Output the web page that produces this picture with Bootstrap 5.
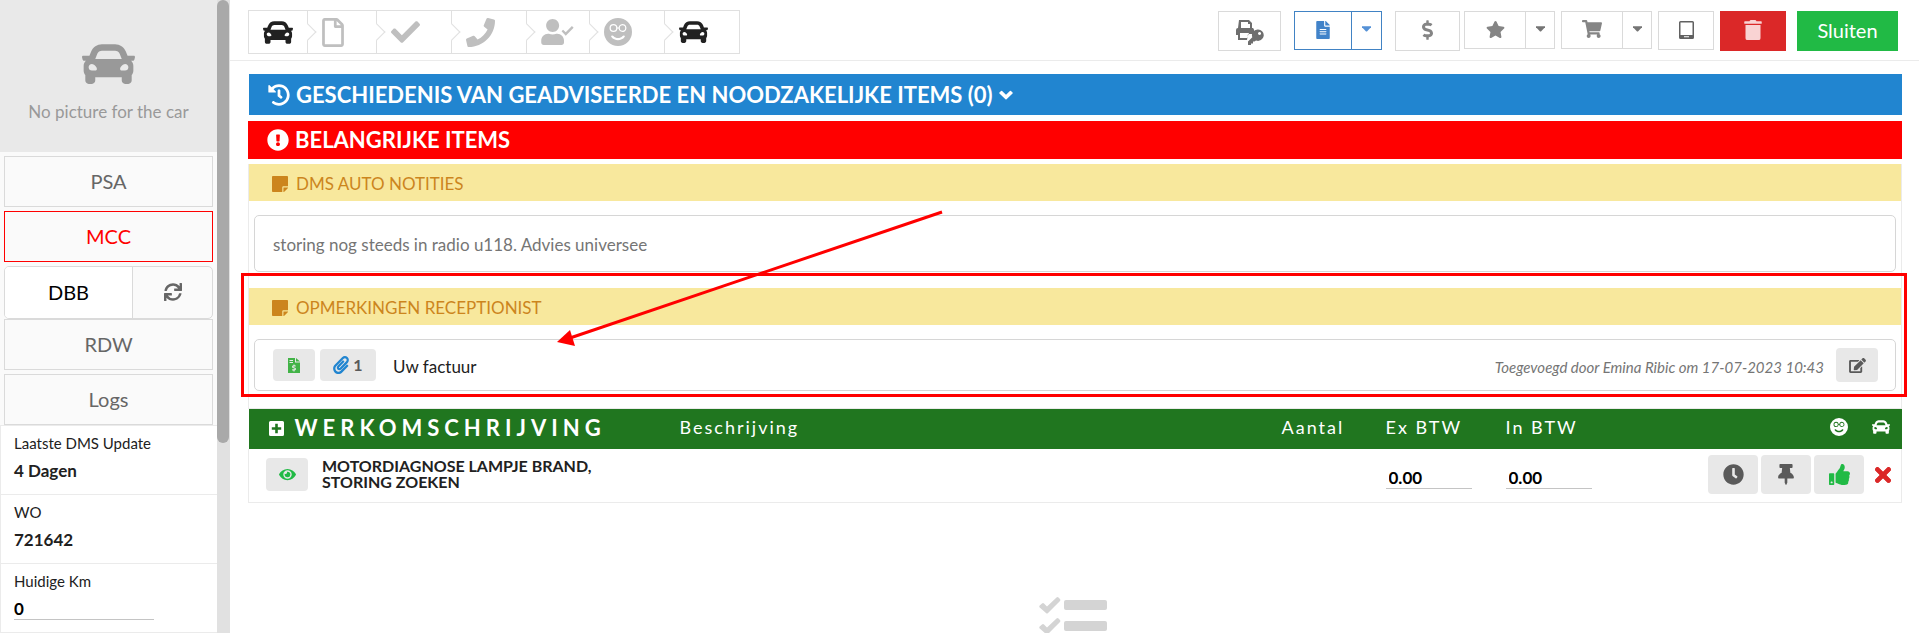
<!DOCTYPE html>
<html lang="nl">
<head>
<meta charset="utf-8">
<meta name="viewport" content="width=device-width, initial-scale=1">
<title>Werkorder 721642</title>
<link rel="stylesheet" href="https://cdn.jsdelivr.net/npm/bootstrap@5.3.0/dist/css/bootstrap.min.css">
<style>
  body { font-family: Lato, "Liberation Sans", sans-serif; font-size: 17px; line-height: 20px; color: #212121; background: #fff; }
  svg { fill: currentColor; display: block; flex: none; }
  .btn { --bs-btn-border-radius: 0; --bs-btn-padding-x: 0; --bs-btn-padding-y: 0; display: flex; align-items: center; justify-content: center; }

  /* sidebar */
  .side { width: 230px; background: #fafafa; }
  .photo { height: 152px; background: #e9e9e9; color: #999; font-size: 17px; gap: 18px; padding-top: 44px; }
  .side-btn { height: 51px; border: 1px solid #dadada; color: #666; background: #fafafa; font-size: 20px; padding-bottom: 2px; }
  .side-btn.alert-btn { border-color: red; color: red; }
  .split { height: 53px; border: 1px solid #dadada; border-radius: 5px; overflow: hidden; }
  .split .btn { font-size: 20px; border: 0; color: #666; padding-bottom: 2px; }
  .split .main-half { flex: 0 0 128px; background: #fff; color: #000; border-right: 1px solid #dadada; }
  .fact { background: #fff; border: 1px solid #ebebeb; border-width: 1px 0 0 1px; height: 69px; padding: 7px 13px; }
  .fact dt, .fact label { font-weight: 400; font-size: 15px; }
  .fact dd, .fact input { font-weight: 700; margin: 8px 0 0; font-size: 17px; line-height: 20px; }
  .line-input { border: 0; border-bottom: 1px solid #c4c4c4; background: none; padding: 0; border-radius: 0; display: block; font-weight: 700; }
  .fact .line-input { width: 140px; }
  .track { width: 13px; background: #e1e1e1; }
  .thumb { width: 12px; height: 70%; background: #a9a9a9; border-radius: 6px; }

  /* top bar */
  .topbar { height: 61px; border-bottom: 1px solid #ebebeb; padding: 10px 21px 0 18px; }
  .steps { border: 1px solid #e0e0e0; height: 44px; width: 492px; }
  .step { border: 0; background: none; padding: 0 0 0 14px; position: relative; display: flex; align-items: center; color: #bfbfbf; border-right: 1px solid #e0e0e0; }
  .step:last-child { border-right: 0; }
  .step:not(:last-child)::after { content: ""; position: absolute; right: -7px; top: 15px; width: 12px; height: 12px; background: #fff; border: 1px solid #e0e0e0; border-width: 1px 1px 0 0; transform: rotate(45deg); }
  .step.done { color: #212121; }
  .w59 { width: 59px; } .w69 { width: 69px; } .w75 { width: 75px; } .w62 { width: 63px; }
  .tools { padding-top: 1px; }
  .tool { border: 1px solid #dadada; background: #fff; color: #858585; height: 40px; padding-bottom: 2px; }
  .tool.low { height: 38px; } .tool.mid { height: 39px; }
  .tool.keyed { padding: 4px 0 0; }
  .tool + .drop { border-left: 0; }
  .blue { border-color: #4183c4; color: #4183c9; }
  .drop { width: 30px; color: #757575; padding-bottom: 3px; }
  .drop.blue { color: #5591d6; }
  .red { background: #db2828; border-color: #db2828; color: #f9d3d3; width: 66px; }
  .green { background: #21ba45; border-color: #21ba45; color: #fff; width: 101px; font-size: 20px; }

  /* content */
  .content { padding: 13px 17px 0 18px; }
  .bar { color: #fff; font-size: 22px; font-weight: 700; line-height: 26px; padding-left: 19px; gap: 6px; border: 0; }
  .bar-blue { background: #2185d0; height: 41px; margin-left: 1px; width: calc(100% - 1px); }
  .bar-red { background: red; height: 38px; margin: 6px 0 5px; }
  .frame { border: 1px solid #ebebeb; border-top: 0; }
  .note-head { background: #f8e89d; color: #cc851d; font-size: 17px; font-weight: 400; line-height: 20px; height: 37px; padding: 2px 0 0 23px; gap: 8px; margin: 0; }
  .note { border: 1px solid #d6d6d6; border-radius: 5px; margin: 14px 5px 0; padding: 0 17px 0 18px; }
  .note-a { height: 57px; color: #757575; padding-top: 2px; }
  .note-b { height: 52px; }
  .soft { background: #e8e8e8; color: #5a5a5a; border: 0; border-radius: 4px; }
  .stamp { font-size: 15px; color: #757575; }
  .reception { position: relative; margin-top: 16px; padding-bottom: 17px; }
  .highlight { position: absolute; inset: -15px -6px 11px -8px; border: 3px solid red; pointer-events: none; }
  .pointer { position: absolute; left: 300px; top: -80px; pointer-events: none; }

  /* work table */
  .work { table-layout: fixed; width: 100%; margin: 0; border-collapse: collapse; }
  .work th { background: #20761f; color: #fff; height: 40px; font-weight: 400; font-size: 18px; letter-spacing: 2px; padding: 0 0 4px; vertical-align: middle; }
  .work th.title { font-size: 22px; font-weight: 700; letter-spacing: 5px; padding: 0 0 2px 20px; }
  .work td { height: 53px; padding: 0 0 1px; vertical-align: middle; }
  .frame-row { border: 1px solid #ebebeb; border-top: 0; }
  .job { font-size: 16px; font-weight: 700; line-height: 16px; padding-bottom: 2px; }
  .work .line-input { width: 86px; color: #000; font-size: 17px; height: 24px; padding: 2px 0 0 3px; margin-top: 4px; }
</style>
</head>
<body class="d-flex vh-100 overflow-hidden">

<svg width="0" height="0" class="position-absolute" aria-hidden="true">
  <symbol id="car" viewBox="0 64 512 384"><path d="M499.99 176h-59.87l-16.64-41.6C406.38 91.63 365.57 64 319.5 64h-127c-46.06 0-86.88 27.63-103.99 70.4L71.87 176H12.01C4.2 176-1.53 183.34.37 190.91l6 24C7.7 220.25 12.5 224 18.01 224h20.07C24.65 235.73 16 252.78 16 272v48c0 16.12 6.16 30.67 16 41.93V416c0 17.67 14.33 32 32 32h32c17.67 0 32-14.33 32-32v-32h256v32c0 17.67 14.33 32 32 32h32c17.67 0 32-14.33 32-32v-54.07c9.84-11.25 16-25.8 16-41.93v-48c0-19.22-8.65-36.27-22.07-48H494c5.51 0 10.31-3.75 11.64-9.09l6-24c1.89-7.57-3.84-14.91-11.65-14.91zm-352.06-17.83c7.29-18.22 24.94-30.17 44.57-30.17h127c19.63 0 37.28 11.95 44.57 30.17L384 208H128l19.93-49.83zM96 319.8c-19.2 0-32-12.76-32-31.9S76.8 256 96 256s48 28.71 48 47.85-28.8 15.95-48 15.95zm320 0c-19.2 0-48 3.19-48-15.95S396.8 256 416 256s32 12.76 32 31.9-12.8 31.9-32 31.9z"/></symbol>
  <symbol id="smile" viewBox="0 0 28 28"><path fill-rule="evenodd" d="M14 0a14 14 0 1 1 0 28a14 14 0 1 1 0-28zM9.500 6a4 4 0 1 0 0 8a4 4 0 0 0 4-3.500h1a4 4 0 1 0 0-1h-1a4 4 0 0 0-4-3.500zM9.500 7.300a2.700 2.700 0 1 1 0 5.400a2.700 2.700 0 1 1 0-5.400zM18.500 7.300a2.700 2.700 0 1 1 0 5.400a2.700 2.700 0 1 1 0-5.400zM8 17.500c-1 .3-1 1-.600 1.600c3 4.200 10.200 4.200 13.200 0c.400-.600.400-1.300-.600-1.600c-.500-.2-1 0-1.400.500c-2.500 2.700-6.700 2.700-9.200 0c-.400-.500-.900-.700-1.400-.500z"/></symbol>
  <symbol id="check" viewBox="0 65 512 382"><path d="M173.898 439.404l-166.4-166.4c-9.997-9.997-9.997-26.206 0-36.204l36.203-36.204c9.997-9.998 26.207-9.998 36.204 0L192 312.69 432.095 72.596c9.997-9.997 26.207-9.997 36.204 0l36.203 36.204c9.997 9.997 9.997 26.206 0 36.204l-294.4 294.401c-9.998 9.997-26.207 9.997-36.204-.001z"/></symbol>
  <symbol id="note" viewBox="0 32 448 448"><path d="M312 320h136V56c0-13.300-10.700-24-24-24H24C10.700 32 0 42.700 0 56v400c0 13.300 10.700 24 24 24h264V344c0-13.200 10.800-24 24-24zm129 55l-98 98c-4.500 4.500-10.600 7-17 7h-6V352h128v6.100c0 6.300-2.500 12.400-7 16.900z"/></symbol>
  <symbol id="caret" viewBox="0 0 10 6"><path d="M0 0h10v1L5.500 5.700h-1L0 1z"/></symbol>
</svg>

<aside class="side d-flex flex-shrink-0 h-100 overflow-hidden">
  <div class="flex-grow-1">
    <div class="photo d-flex flex-column align-items-center">
      <svg width="53" height="40"><use href="#car"/></svg>
      <span>No picture for the car</span>
    </div>
    <div class="d-flex flex-column gap-1 px-1 pt-1">
      <button class="btn side-btn">PSA</button>
      <button class="btn side-btn alert-btn">MCC</button>
      <div>
        <div class="split d-flex">
          <button class="btn main-half h-100">DBB</button>
          <button class="btn flex-grow-1 h-100" aria-label="Vernieuwen"><svg width="18" height="18" viewBox="0 0 512 512"><path d="M440.650 12.570l4 82.770A247.160 247.160 0 0 0 255.830 8C134.730 8 33.910 94.920 12.290 209.820A12 12 0 0 0 24.090 224h49.050a12 12 0 0 0 11.670-9.260 175.910 175.910 0 0 1 317-56.940l-101.460-4.860a12 12 0 0 0-12.570 12v47.410a12 12 0 0 0 12 12H500a12 12 0 0 0 12-12V12a12 12 0 0 0-12-12h-47.370a12 12 0 0 0-11.980 12.570zM255.830 432a175.610 175.610 0 0 1-146-77.800l101.800 4.870a12 12 0 0 0 12.570-12v-47.400a12 12 0 0 0-12-12H12a12 12 0 0 0-12 12V500a12 12 0 0 0 12 12h47.350a12 12 0 0 0 12-12.600l-4.150-82.570A247.170 247.170 0 0 0 255.830 504c121.110 0 221.930-86.920 243.550-201.820a12 12 0 0 0-11.800-14.180h-49.050a12 12 0 0 0-11.670 9.260A175.860 175.860 0 0 1 255.830 432z"/></svg></button>
        </div>
        <button class="btn side-btn w-100">RDW</button>
      </div>
      <button class="btn side-btn">Logs</button>
    </div>
    <dl class="m-0">
      <div class="fact"><dt>Laatste DMS Update</dt><dd>4 Dagen</dd></div>
      <div class="fact"><dt>WO</dt><dd>721642</dd></div>
      <div class="fact"><label for="km" class="d-block">Huidige Km</label><input id="km" class="line-input" value="0"></div>
      <div class="fact"></div>
    </dl>
  </div>
  <div class="track h-100 flex-shrink-0"><div class="thumb"></div></div>
</aside>

<main class="flex-grow-1 overflow-hidden">
  <header class="topbar d-flex justify-content-between align-items-start">
    <nav class="steps d-flex" aria-label="Voortgang">
      <button class="step done w59" aria-label="Auto binnen"><svg width="30" height="23"><use href="#car"/></svg></button>
      <button class="step w69" aria-label="Document"><svg width="22" height="29" viewBox="0 0 384 512"><path d="M369.900 97.900L286 14C277 5 264.800-.1 252.100-.1H48C21.500 0 0 21.500 0 48v416c0 26.500 21.500 48 48 48h288c26.500 0 48-21.500 48-48V131.900c0-12.700-5.100-25-14.100-34zM332.100 128H256V51.900l76.100 76.100zM48 464V48h160v104c0 13.300 10.700 24 24 24h104v288H48z"/></svg></button>
      <button class="step w75" aria-label="Akkoord"><svg width="29" height="22"><use href="#check"/></svg></button>
      <button class="step w75" aria-label="Bellen"><svg width="29" height="29" viewBox="0 0 512 512"><path d="M493.400 24.600l-104-24c-11.300-2.600-22.900 3.300-27.500 13.900l-48 112c-4.200 9.800-1.400 21.300 6.900 28l60.600 49.600c-36 76.700-98.900 140.500-177.200 177.200l-49.600-60.600c-6.800-8.300-18.200-11.100-28-6.900l-112 48C3.900 366.500-2 378.100.600 389.400l24 104C27.100 504.200 36.700 512 48 512c256.100 0 464-207.500 464-464 0-11.200-7.700-20.900-18.600-23.400z"/></svg></button>
      <button class="step w62" aria-label="Klant akkoord"><svg width="33" height="26" viewBox="0 0 640 512"><path d="M224 256c70.700 0 128-57.300 128-128S294.700 0 224 0 96 57.300 96 128s57.300 128 128 128zm89.600 32h-16.700c-22.200 10.200-46.900 16-72.900 16s-50.600-5.800-72.900-16h-16.700C60.200 288 0 348.200 0 422.400V464c0 26.500 21.500 48 48 48h352c26.500 0 48-21.500 48-48v-41.600c0-74.200-60.200-134.400-134.400-134.400z"/><path d="M400 240l30-30 52 50 122-124 34 34-156 160z"/></svg></button>
      <button class="step w75" aria-label="Tevreden"><svg width="28" height="28"><use href="#smile"/></svg></button>
      <button class="step done" aria-label="Auto klaar"><svg width="29" height="22"><use href="#car"/></svg></button>
    </nav>
    <div class="tools d-flex align-items-start">
      <button class="btn tool keyed" style="width:63px" aria-label="Afdrukken en sleutel"><svg width="28" height="26" viewBox="0 0 28 26" color="#6e6e6e"><path fill-rule="evenodd" d="M3 0h10l3 3v5h1q1 1 1 2v4h-6l-1 6H2v-5H0v-5q0-2 2-2zM5 2v6h9V4h-2V2zM4 13v5h7l2-5z"/><path fill="#fff" d="M21 8.500a7 7 0 0 1 0 13l-3 1-3 3.500h-5l2-6 4-4z"/><path fill-rule="evenodd" d="M21.500 9.500a5.700 5.700 0 1 1-1.500 11l-1.500 1h-1.500v2h-2v1.500h-3v-3.500l4.300-4.300a5.700 5.700 0 0 1 5.200-7.700zM23.500 12a1.500 1.500 0 1 0 .1 0z"/></svg></button>
      <div class="d-flex" style="margin:0 13px">
        <button class="btn tool mid blue" style="width:58px" aria-label="Factuur"><svg width="14" height="18" viewBox="0 0 384 512"><path d="M224 136V0H24C10.700 0 0 10.700 0 24v464c0 13.300 10.700 24 24 24h336c13.300 0 24-10.700 24-24V160H248c-13.200 0-24-10.800-24-24zm64 236c0 6.600-5.400 12-12 12H108c-6.600 0-12-5.400-12-12v-8c0-6.600 5.400-12 12-12h168c6.600 0 12 5.400 12 12v8zm0-64c0 6.600-5.400 12-12 12H108c-6.600 0-12-5.400-12-12v-8c0-6.600 5.400-12 12-12h168c6.600 0 12 5.400 12 12v8zm0-72v8c0 6.600-5.400 12-12 12H108c-6.600 0-12-5.400-12-12v-8c0-6.600 5.400-12 12-12h168c6.600 0 12 5.400 12 12zm96-114.100v6.100H256V0h6.100c6.400 0 12.500 2.500 17 7l97.900 98c4.500 4.500 7 10.600 7 16.900z"/></svg></button>
        <button class="btn tool mid blue drop" aria-label="Meer"><svg width="9" height="6"><use href="#caret"/></svg></button>
      </div>
      <button class="btn tool me-1" style="width:65px" aria-label="Betaling"><svg width="11" height="20" viewBox="0 0 288 512"><path d="M209.200 233.400l-108-31.600C88.700 198.200 80 186.500 80 173.500c0-16.300 13.200-29.500 29.500-29.500h66.300c12.200 0 24.200 3.700 34.200 10.500 6.100 4.100 14.300 3.100 19.500-2l34.800-34c7.100-6.900 6.100-18.400-1.800-24.500C238 74.800 207.400 64.100 176 64V16c0-8.800-7.200-16-16-16h-32c-8.800 0-16 7.200-16 16v48h-2.500C45.800 64-5.400 118.700.5 183.600c4.200 46.100 39.400 83.600 83.800 96.600l102.500 30c12.500 3.700 21.200 15.300 21.200 28.300 0 16.300-13.200 29.500-29.500 29.500h-66.300C100 368 88 364.300 78 357.500c-6.100-4.100-14.300-3.100-19.500 2l-34.800 34c-7.100 6.900-6.100 18.400 1.800 24.500 24.500 19.200 55.100 29.900 86.500 30v48c0 8.800 7.200 16 16 16h32c8.800 0 16-7.200 16-16v-48.200c46.600-.9 90.300-28.600 105.700-72.700 21.500-61.600-14.600-124.800-72.500-141.700z"/></svg></button>
      <div class="d-flex">
        <button class="btn tool low" style="width:62px" aria-label="Favoriet"><svg width="19" height="17" viewBox="20 0 536 512"><path d="M259.300 17.800L194 150.200 47.900 171.500c-26.200 3.800-36.700 36.100-17.700 54.600l105.700 103-25 145.500c-4.500 26.300 23.200 46 46.400 33.700L288 439.600l130.700 68.700c23.200 12.200 50.900-7.400 46.400-33.700l-25-145.500 105.700-103c19-18.500 8.500-50.800-17.700-54.600L382 150.200 316.700 17.800c-11.700-23.600-45.600-23.900-57.400 0z"/></svg></button>
        <button class="btn tool low drop" style="width:29px" aria-label="Meer"><svg width="9" height="6"><use href="#caret"/></svg></button>
      </div>
      <div class="d-flex" style="margin:0 6px">
        <button class="btn tool low" style="width:62px" aria-label="Winkelwagen"><svg width="20" height="18" viewBox="0 0 576 512"><path d="M528.120 301.319l47.273-208C578.806 78.301 567.391 64 551.990 64H159.208l-9.166-44.810C147.758 8.021 137.930 0 126.529 0H24C10.745 0 0 10.745 0 24v16c0 13.255 10.745 24 24 24h69.883l70.248 343.435C147.325 417.100 136 435.222 136 456c0 30.928 25.072 56 56 56s56-25.072 56-56c0-15.674-6.447-29.835-16.824-40h209.647C430.447 426.165 424 440.326 424 456c0 30.928 25.072 56 56 56s56-25.072 56-56c0-22.172-12.888-41.332-31.579-50.405l5.517-24.276c3.413-15.018-8.002-29.319-23.403-29.319H218.117l-6.545-32h293.145c11.206 0 20.920-7.754 23.403-18.681z"/></svg></button>
        <button class="btn tool low drop" style="width:29px" aria-label="Meer"><svg width="9" height="6"><use href="#caret"/></svg></button>
      </div>
      <button class="btn tool mid" style="width:56px" aria-label="Tablet"><svg width="15" height="18" viewBox="0 0 15 18" color="#616161"><path fill-rule="evenodd" d="M1.500 0h12q1.500 0 1.500 1.500v15q0 1.500-1.500 1.500h-12Q0 18 0 16.500v-15Q0 0 1.500 0zM1.500 1.500v12.500h12V1.500zM5 15.200v1h5v-1z"/></svg></button>
      <button class="btn tool red" style="margin:0 11px 0 6px" aria-label="Verwijderen"><svg width="18" height="20" viewBox="0 0 448 512"><path d="M32 464a48 48 0 0 0 48 48h288a48 48 0 0 0 48-48V128H32zM432 32H312l-9.400-18.700A24 24 0 0 0 281.100 0H166.800a23.720 23.720 0 0 0-21.400 13.300L136 32H16A16 16 0 0 0 0 48v32a16 16 0 0 0 16 16h416a16 16 0 0 0 16-16V48a16 16 0 0 0-16-16z"/></svg></button>
      <button class="btn tool green">Sluiten</button>
    </div>
  </header>

  <div class="content">
    <button class="bar bar-blue d-flex align-items-center">
      <svg width="22" height="22" viewBox="0 0 512 512"><path d="M504 255.531c.253 136.640-111.180 248.372-247.820 248.468-59.015.042-113.223-20.530-155.822-54.911-11.077-8.940-11.905-25.541-1.839-35.607l11.267-11.267c8.609-8.609 22.353-9.551 31.891-1.984C173.062 425.135 212.781 440 256 440c101.705 0 184-82.311 184-184 0-101.705-82.311-184-184-184-48.814 0-93.149 18.969-126.068 49.932l50.754 50.754c10.080 10.080 2.941 27.314-11.313 27.314H24c-8.837 0-16-7.163-16-16V38.627c0-14.254 17.234-21.393 27.314-11.314l49.372 49.372C129.209 34.136 189.552 8 256 8c136.810 0 247.747 110.781 248 247.531zm-180.912 78.784l9.823-12.630c8.138-10.463 6.253-25.542-4.210-33.679L288 256.349V152c0-13.255-10.745-24-24-24h-16c-13.255 0-24 10.745-24 24v135.651l65.409 50.874c10.463 8.137 25.541 6.253 33.679-4.210z"/></svg>
      <span>GESCHIEDENIS VAN GEADVISEERDE EN NOODZAKELIJKE ITEMS (0)</span>
      <svg width="14" height="10" viewBox="0 0 13 9"><path d="M.4 2.200L1.900.7q.5-.4 1 0L6.500 4.300 10.100.7q.5-.4 1 0l1.500 1.500q.4.500 0 1L7 8.500q-.5.400-1 0L.4 3.200q-.4-.5 0-1z"/></svg>
    </button>
    <h2 class="bar bar-red d-flex align-items-center">
      <svg width="22" height="22" viewBox="0 0 512 512"><path d="M504 256c0 136.997-111.043 248-248 248S8 392.997 8 256C8 119.083 119.043 8 256 8s248 111.083 248 248zm-248 50c-25.405 0-46 20.595-46 46s20.595 46 46 46 46-20.595 46-46-20.595-46-46-46zm-43.673-165.346l7.418 136c.347 6.364 5.609 11.346 11.982 11.346h48.546c6.373 0 11.635-4.982 11.982-11.346l7.418-136c.375-6.874-5.098-12.654-11.982-12.654h-63.383c-6.884 0-12.356 5.780-11.981 12.654z"/></svg>
      <span>BELANGRIJKE ITEMS</span>
    </h2>

    <div class="frame">
      <section>
        <h3 class="note-head d-flex align-items-center"><svg width="16" height="16"><use href="#note"/></svg>DMS AUTO NOTITIES</h3>
        <div class="note note-a d-flex align-items-center">storing nog steeds in radio u118. Advies universee</div>
      </section>
      <section class="reception">
        <h3 class="note-head d-flex align-items-center"><svg width="16" height="16"><use href="#note"/></svg>OPMERKINGEN RECEPTIONIST</h3>
        <div class="note note-b d-flex align-items-center">
          <button class="btn soft" style="width:42px;height:32px" aria-label="Factuur"><svg width="12" height="15" viewBox="0 0 12 15" color="#42b347"><path fill-rule="evenodd" d="M0 0h7v4.500h5V15H0zM1.500 2v1H5V2zM1.500 4v1H5V4zM5.500 6.500v.8q-1.500.3-1.500 1.500t1.500 1.400l1 .3q.5.500-.3.700H4.200v1.200l1.300.2v.9h1v-.9Q8 12.300 8 11.100T6.500 9.500l-1-.3q-.5-.5.300-.7h1.900V7.400l-1.200-.2v-.7z"/><path d="M8 0l4 3.500H8z"/></svg></button>
          <button class="btn soft gap-1 fw-bold" style="width:56px;height:32px;margin-left:5px"><svg width="16" height="18" viewBox="0 0 448 512" color="#2185d0"><path d="M43.246 466.142c-58.430-60.289-57.341-157.511 1.386-217.581L254.392 34c44.316-45.332 116.351-45.336 160.671 0 43.890 44.894 43.943 117.329 0 162.276L232.214 383.128c-29.855 30.537-78.633 30.111-107.982-.998-28.275-29.970-27.368-77.473 1.452-106.953l143.743-146.835c6.182-6.314 16.312-6.422 22.626-.241l22.861 22.379c6.315 6.182 6.422 16.312.241 22.626L171.427 319.927c-4.932 5.045-5.236 13.428-.648 18.292 4.372 4.634 11.245 4.711 15.688.165l182.849-186.851c19.613-20.062 19.613-52.725-.011-72.798-19.189-19.627-49.957-19.637-69.154 0L90.390 293.295c-34.763 35.560-35.299 93.120-1.191 128.313 34.010 35.093 88.985 35.137 123.058.286l172.060-175.999c6.177-6.319 16.307-6.433 22.626-.256l22.877 22.364c6.319 6.177 6.434 16.307.256 22.626l-172.060 175.998c-59.576 60.938-155.943 60.216-214.770-.485z"/></svg>1</button>
          <span class="pt-1" style="margin-left:17px">Uw factuur</span>
          <em class="stamp ms-auto pt-1">Toegevoegd door Emina Ribic om 17-07-2023 10:43</em>
          <button class="btn soft" style="width:42px;height:34px;margin-left:12px" aria-label="Bewerken"><svg width="17" height="15" viewBox="0 0 576 512"><path d="M402.600 83.200l90.200 90.200c3.800 3.800 3.800 10 0 13.800L274.400 405.600l-92.800 10.300c-12.400 1.400-22.900-9.100-21.500-21.500l10.300-92.800L388.800 83.200c3.800-3.800 10-3.800 13.800 0zm162-22.900l-48.800-48.800c-15.200-15.200-39.900-15.200-55.200 0l-35.400 35.400c-3.800 3.800-3.800 10 0 13.800l90.200 90.200c3.800 3.800 10 3.800 13.800 0l35.400-35.400c15.200-15.300 15.200-40 0-55.200zM384 346.200V448H64V128h229.800c3.200 0 6.200-1.300 8.500-3.500l40-40c7.600-7.600 2.200-20.500-8.500-20.500H48C21.500 64 0 85.500 0 112v352c0 26.500 21.500 48 48 48h352c26.500 0 48-21.500 48-48V306.200c0-10.700-12.900-16-20.500-8.500l-40 40c-2.200 2.300-3.500 5.300-3.500 8.500z"/></svg></button>
        </div>
        <div class="highlight"></div>
        <svg class="pointer" width="400" height="140" viewBox="0 0 400 140" color="#f00"><path d="M21 130L393 4" stroke="red" stroke-width="3"/><path d="M8 134L21 122 26 138z"/></svg>
      </section>
    </div>

    <table class="work">
      <colgroup><col style="width:431px"><col><col style="width:104px"><col style="width:120px"><col style="width:202px"><col style="width:109px"><col style="width:85px"></colgroup>
      <thead><tr>
        <th class="title"><div class="d-flex align-items-center" style="gap:11px"><svg width="15" height="15" viewBox="0 0 15 15"><path fill-rule="evenodd" d="M1.500 0h12q1.500 0 1.500 1.500v12q0 1.500-1.500 1.500h-12Q0 15 0 13.500v-12Q0 0 1.500 0zM6.200 2.800v3.400H2.800v2.600h3.400v3.400h2.600V8.800h3.400V6.200H8.800V2.800z"/></svg>WERKOMSCHRIJVING</div></th>
        <th>Beschrijving</th><th>Aantal</th><th>Ex BTW</th><th>In BTW</th><th></th>
        <th><div class="d-flex align-items-center justify-content-end" style="gap:24px;padding-right:12px"><svg width="18" height="18"><use href="#smile"/></svg><svg width="18" height="14"><use href="#car"/></svg></div></th>
      </tr></thead>
      <tbody><tr class="frame-row">
        <td><div class="d-flex align-items-center" style="gap:14px;padding-left:17px">
          <button class="btn soft" style="width:42px;height:33px;color:#21ba45" aria-label="Tonen"><svg width="17" height="15" viewBox="0 0 576 512"><path d="M572.520 241.400C518.290 135.590 410.930 64 288 64S57.680 135.640 3.480 241.410a32.350 32.350 0 0 0 0 29.190C57.710 376.410 165.070 448 288 448s230.320-71.640 284.520-177.410a32.350 32.350 0 0 0 0-29.190zM288 400a144 144 0 1 1 144-144 143.930 143.930 0 0 1-144 144zm0-240a95.310 95.310 0 0 0-25.310 3.790 47.850 47.850 0 0 1-66.900 66.900A95.780 95.780 0 1 0 288 160z"/></svg></button>
          <div class="job">MOTORDIAGNOSE LAMPJE BRAND,<br>STORING ZOEKEN</div></div></td>
        <td></td><td></td>
        <td><input class="line-input" aria-label="Ex BTW" value="0.00"></td>
        <td><input class="line-input" aria-label="In BTW" value="0.00"></td>
        <td colspan="2"><div class="d-flex align-items-center justify-content-end" style="gap:3px;padding-right:10px">
          <button class="btn soft" style="width:50px;height:39px" aria-label="Tijd"><svg width="21" height="21" viewBox="0 0 512 512"><path d="M256,8C119,8,8,119,8,256S119,504,256,504,504,393,504,256,393,8,256,8Zm92.490,313h0l-20,25a16,16,0,0,1-22.490,2.500h0l-67-49.720a40,40,0,0,1-15-31.230V112a16,16,0,0,1,16-16h32a16,16,0,0,1,16,16V256l58,42.500A16,16,0,0,1,348.490,321Z"/></svg></button>
          <button class="btn soft" style="width:50px;height:39px" aria-label="Vastzetten"><svg width="16" height="21" viewBox="0 0 384 512"><path d="M298.028 214.267L285.793 96H328c13.255 0 24-10.745 24-24V24c0-13.255-10.745-24-24-24H56C42.745 0 32 10.745 32 24v48c0 13.255 10.745 24 24 24h42.207L85.972 214.267C37.465 236.820 0 277.261 0 328c0 13.255 10.745 24 24 24h136v104.007c0 1.242.289 2.467.845 3.578l24 48c2.941 5.882 11.364 5.893 14.311 0l24-48a8.008 8.008 0 0 0 .845-3.578V352h136c13.255 0 24-10.745 24-24-.001-51.183-37.983-91.420-85.973-113.733z"/></svg></button>
          <button class="btn soft" style="width:50px;height:39px;color:#21ba45" aria-label="Goedkeuren"><svg width="21" height="21" viewBox="0 0 512 512"><path d="M104 224H24c-13.255 0-24 10.745-24 24v240c0 13.255 10.745 24 24 24h80c13.255 0 24-10.745 24-24V248c0-13.255-10.745-24-24-24zM64 472c-13.255 0-24-10.745-24-24s10.745-24 24-24 24 10.745 24 24-10.745 24-24 24zM384 81.452c0 42.416-25.970 66.208-33.277 94.548h101.723c33.397 0 59.397 27.746 59.553 58.098.084 17.938-7.546 37.249-19.439 49.197l-.110.110c9.836 23.337 8.237 56.037-9.308 79.469 8.681 25.895-.069 57.704-16.382 74.757 4.298 17.598 2.244 32.575-6.148 44.632C440.202 511.587 389.616 512 346.839 512l-2.845-.001c-48.287-.017-87.806-17.598-119.560-31.725-15.957-7.099-36.821-15.887-52.651-16.178-6.540-.120-11.783-5.457-11.783-11.998v-213.770c0-3.200 1.282-6.271 3.558-8.521 39.614-39.144 56.648-80.587 89.117-113.111 14.804-14.832 20.188-37.236 25.393-58.902C282.515 39.293 291.817 0 312 0c24 0 72 8 72 81.452z"/></svg></button>
          <button class="btn border-0 ms-2" style="color:#db2828" aria-label="Regel verwijderen"><svg width="16" height="16" viewBox="0 80 352 352"><path stroke="currentColor" stroke-width="16" d="M242.720 256l100.070-100.070c12.280-12.280 12.280-32.190 0-44.480l-22.240-22.240c-12.280-12.280-32.190-12.280-44.480 0L176 189.280 75.930 89.210c-12.280-12.280-32.190-12.280-44.480 0L9.210 111.450c-12.280 12.280-12.280 32.190 0 44.480L109.280 256 9.210 356.070c-12.280 12.280-12.280 32.190 0 44.480l22.240 22.240c12.280 12.280 32.200 12.280 44.480 0L176 322.720l100.070 100.070c12.280 12.280 32.200 12.280 44.480 0l22.240-22.240c12.280-12.280 12.280-32.190 0-44.480L242.720 256z"/></svg></button>
        </div></td>
      </tr></tbody>
    </table>

    <div class="d-flex justify-content-center pe-1" style="margin-top:94px">
      <svg width="68" height="60" viewBox="0 0 68 60" color="#d4d4d4">
        <g id="task"><path d="M7 16q1 1 2 0L21 4q.7-1 0-2L19.500.5q-1-.8-2 0L8 9.500 5 6.500q-1-.8-2 0L.7 8.500q-.9 1 0 2z"/><rect x="25" y="3" width="43" height="10" rx="2"/></g>
        <use href="#task" y="21"/><use href="#task" y="42"/>
      </svg>
    </div>
  </div>
</main>
<script src="https://cdn.jsdelivr.net/npm/bootstrap@5.3.0/dist/js/bootstrap.bundle.min.js"></script>
</body>
</html>
